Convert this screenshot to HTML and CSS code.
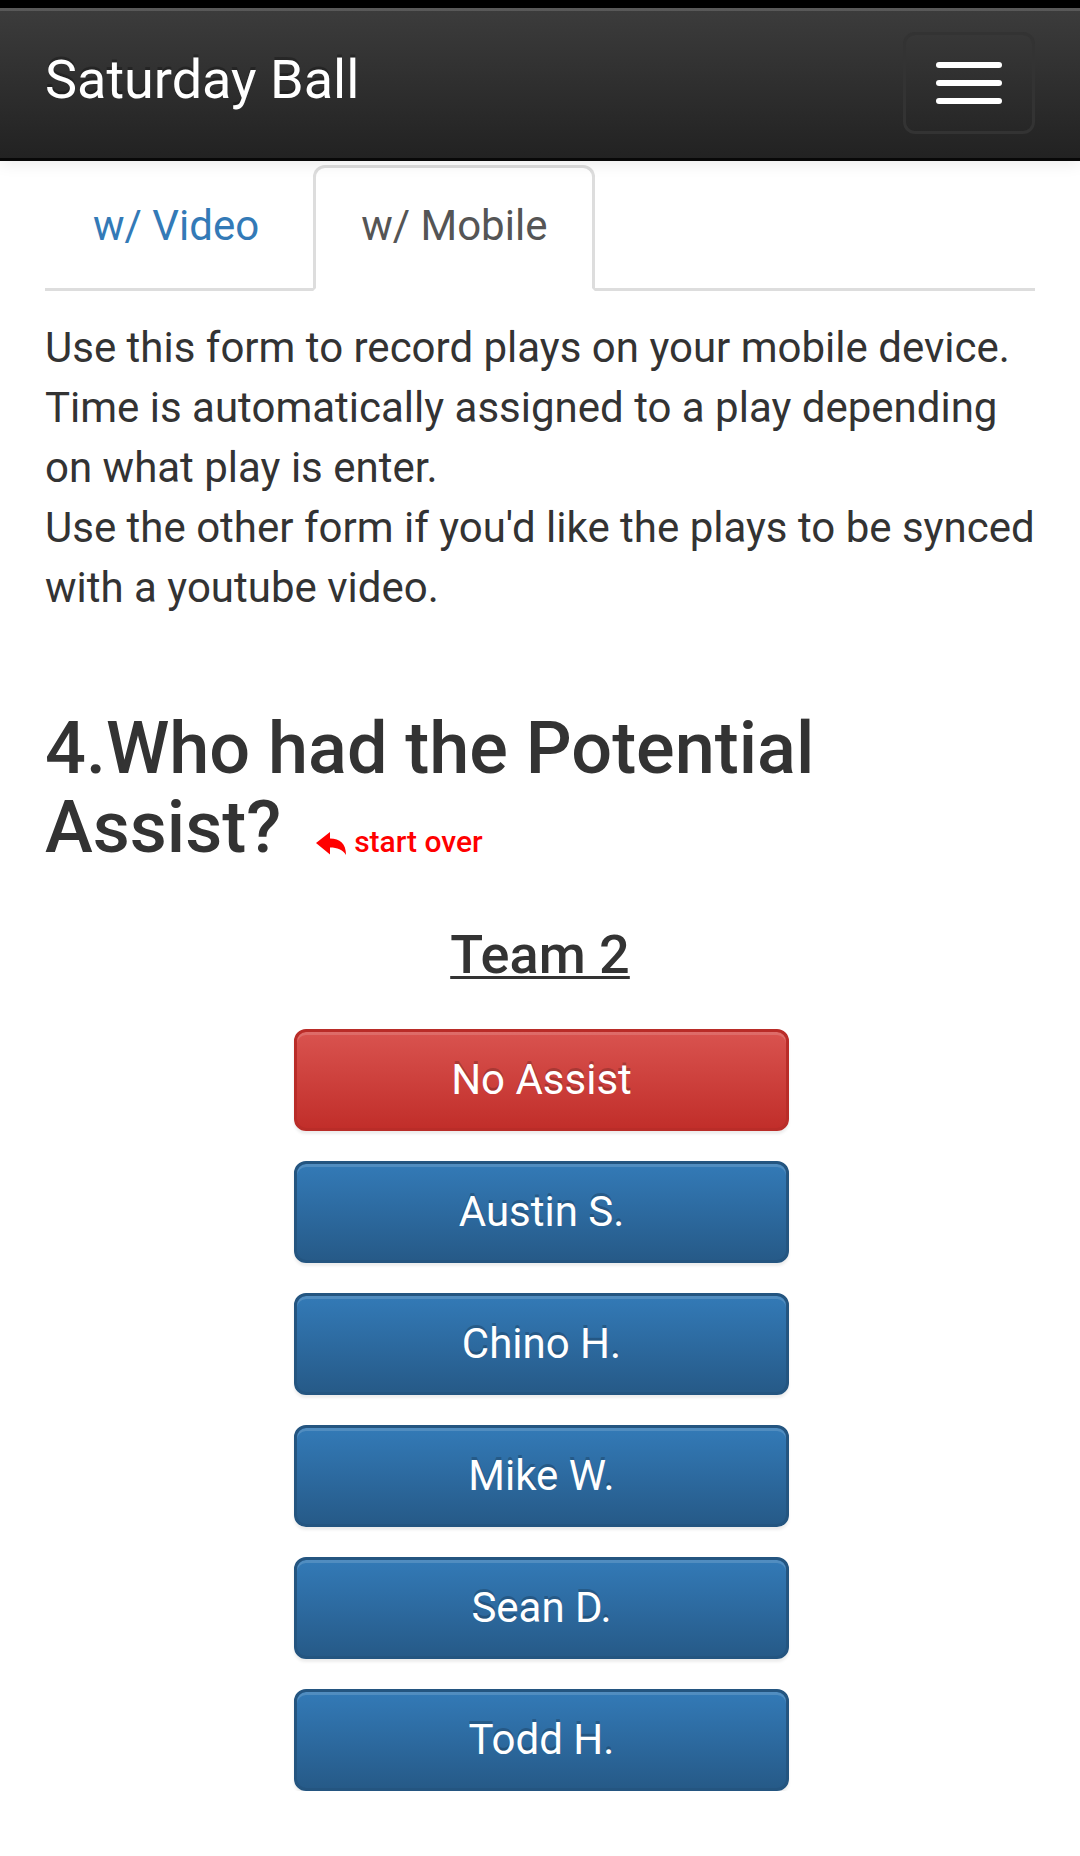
FILE: index.html
```html
<!DOCTYPE html>
<html lang="en">
<head>
<meta charset="utf-8">
<title>Saturday Ball</title>
<link rel="stylesheet" href="styles.css">
</head>
<body>
<div class="topstrip"></div>
<nav class="navbar">
  <div class="brand">Saturday Ball</div>
  <button class="toggle" type="button" aria-label="Toggle navigation">
    <span class="bar"></span>
    <span class="bar"></span>
    <span class="bar"></span>
  </button>
</nav>
<main class="container">
  <ul class="tabs">
    <li><a class="tab" href="#">w/ Video</a></li>
    <li><a class="tab active" href="#">w/ Mobile</a></li>
  </ul>
  <p class="intro">Use this form to record plays on your mobile device. Time is automatically assigned to a play depending on what play is enter.<br>Use the other form if you'd like the plays to be synced with a youtube video.</p>
  <h3 class="question">4.Who had the Potential Assist? <small class="start-over"><svg class="reply-icon" viewBox="0 0 30 23" width="30" height="23" aria-hidden="true"><path d="M0 11 L14 0 L14 6.5 C24 6.5 30 11.5 30 23 C26.5 17.5 21.5 15.5 14 15.5 L14 22.5 Z" fill="currentColor"/></svg>start over</small></h3>
  <h4 class="team">Team 2</h4>
  <div class="btn-list">
    <button class="btn btn-danger" type="button">No Assist</button>
    <button class="btn btn-primary" type="button">Austin S.</button>
    <button class="btn btn-primary" type="button">Chino H.</button>
    <button class="btn btn-primary" type="button">Mike W.</button>
    <button class="btn btn-primary" type="button">Sean D.</button>
    <button class="btn btn-primary" type="button">Todd H.</button>
  </div>
</main>
</body>
</html>
```
FILE: styles.css
```css
* { box-sizing: border-box; }

body {
  margin: 0;
  background: #fff;
  color: #333;
  font-family: Roboto, "Noto Sans", "Liberation Sans", sans-serif;
  font-size: 42px;
  line-height: 60px;
}

.topstrip {
  height: 8px;
  background: #000;
}

.navbar {
  display: flex;
  justify-content: space-between;
  align-items: flex-start;
  height: 153px;
  padding: 0 45px;
  background: linear-gradient(to bottom, #3c3c3c 0%, #222 100%);
  border-bottom: 3px solid #080808;
  box-shadow: inset 0 3px 0 rgba(255, 255, 255, 0.15), 0 3px 15px rgba(0, 0, 0, 0.08);
  position: relative;
  z-index: 1;
}

.brand {
  padding-top: 42px;
  font-size: 54px;
  line-height: 60px;
  color: #fff;
  text-shadow: 0 -3px 0 rgba(0, 0, 0, 0.25);
}

.toggle {
  margin-top: 24px;
  width: 132px;
  height: 102px;
  padding: 27px 30px;
  border: 3px solid #333;
  border-radius: 12px;
  background: transparent;
  display: flex;
  flex-direction: column;
  gap: 12px;
}

.bar {
  display: block;
  width: 66px;
  height: 6px;
  border-radius: 3px;
  background: #fff;
}

.container {
  padding: 4px 45px 0;
}

.tabs {
  list-style: none;
  margin: 0;
  padding: 0;
  display: flex;
  border-bottom: 3px solid #ddd;
}

.tabs li {
  margin-bottom: -3px;
}

.tab {
  display: block;
  margin-right: 6px;
  padding: 28px 45px 32px;
  font-size: 42px;
  line-height: 60px;
  color: #337ab7;
  text-decoration: none;
  border: 3px solid transparent;
  border-radius: 12px 12px 0 0;
}

.tab.active {
  color: #555;
  background: #fff;
  border-color: #ddd #ddd transparent;
}

.intro {
  margin: 27px 0 30px;
}

.question {
  margin: 91px 0 30px;
  font-size: 72px;
  line-height: 79.2px;
  font-weight: 500;
}

.start-over {
  font-size: 30px;
  line-height: 30px;
  font-weight: 500;
  color: #f00;
}

.reply-icon {
  margin-left: 17px;
  margin-right: 8px;
  vertical-align: -3px;
}

.team {
  margin: 58px 0 44px;
  text-align: center;
  font-size: 54px;
  line-height: 59.4px;
  font-weight: 500;
  text-decoration: underline;
  text-decoration-thickness: 3px;
  text-underline-offset: 3px;
}

.btn-list {
  display: flex;
  flex-direction: column;
  align-items: center;
  gap: 30px;
  padding-left: 3px;
}

.btn {
  width: 495px;
  padding: 18px 36px;
  font-family: inherit;
  font-size: 42px;
  line-height: 60px;
  color: #fff;
  border: 3px solid;
  border-radius: 12px;
  text-shadow: 0 -3px 0 rgba(0, 0, 0, 0.2);
  box-shadow: inset 0 3px 0 rgba(255, 255, 255, 0.15), 0 3px 3px rgba(0, 0, 0, 0.075);
}

.btn-danger {
  background: linear-gradient(to bottom, #d9534f 0%, #c12e2a 100%);
  border-color: #b92c28;
}

.btn-primary {
  background: linear-gradient(to bottom, #337ab7 0%, #265a88 100%);
  border-color: #245580;
}
```
